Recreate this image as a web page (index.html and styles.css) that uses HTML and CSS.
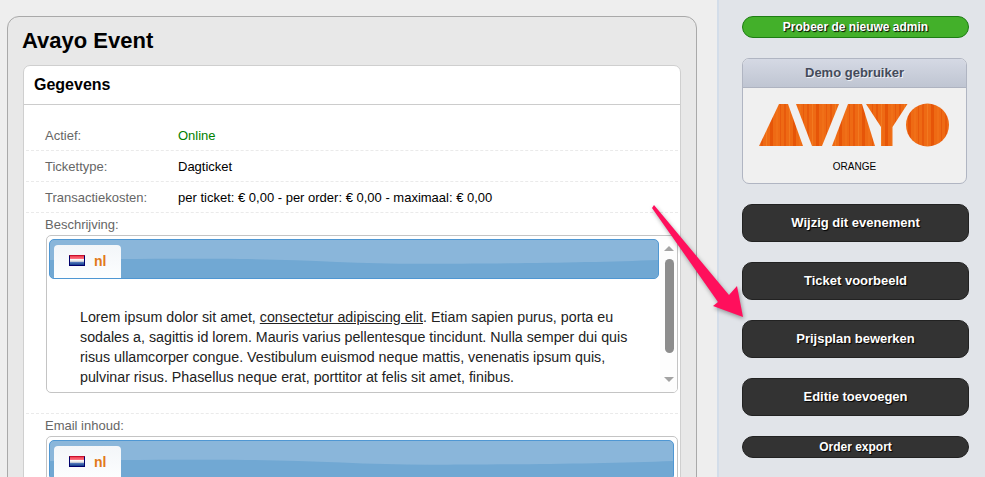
FILE: index.html
```html
<!DOCTYPE html>
<html lang="nl">
<head>
<meta charset="utf-8">
<title>Avayo Event</title>
<link rel="stylesheet" href="styles.css">
</head>
<body>
<div class="page">
  <main class="content">
    <section class="panel">
      <h1 class="title">Avayo Event</h1>
      <div class="card">
        <h2 class="card-head">Gegevens</h2>
        <div class="card-body">
          <div class="row"><span class="label">Actief:</span><span class="value online">Online</span></div>
          <div class="row"><span class="label">Tickettype:</span><span class="value">Dagticket</span></div>
          <div class="row"><span class="label">Transactiekosten:</span><span class="value">per ticket: € 0,00 - per order: € 0,00 - maximaal: € 0,00</span></div>
          <div class="block">
            <div class="block-label">Beschrijving:</div>
            <div class="editor">
              <div class="editor-main">
                <div class="tabbar">
                  <svg class="wave" viewBox="0 0 610 40" preserveAspectRatio="none"><path d="M0 21C60 20 130 19.500 191 20S310 25 371 25 540 24 610 21V40H0Z" fill="#71a8d3"/></svg>
                  <div class="tab">
                    <span class="flag"></span><span class="lang">nl</span>
                  </div>
                </div>
                <p class="lorem">Lorem ipsum dolor sit amet, <u>consectetur adipiscing elit</u>. Etiam sapien purus, porta eu sodales a, sagittis id lorem. Mauris varius pellentesque tincidunt. Nulla semper dui quis risus ullamcorper congue. Vestibulum euismod neque mattis, venenatis ipsum quis, pulvinar risus. Phasellus neque erat, porttitor at felis sit amet, finibus.</p>
              </div>
              <div class="scrollbar">
                <span class="arrow up"></span>
                <span class="thumb"></span>
                <span class="arrow down"></span>
              </div>
            </div>
          </div>
          <div class="block">
            <div class="block-label">Email inhoud:</div>
            <div class="editor">
              <div class="editor-main editor-wide">
                <div class="tabbar">
                  <svg class="wave" viewBox="0 0 610 40" preserveAspectRatio="none"><path d="M0 21C60 20 130 19.500 191 20S310 25 371 25 540 24 610 21V40H0Z" fill="#71a8d3"/></svg>
                  <div class="tab">
                    <span class="flag"></span><span class="lang">nl</span>
                  </div>
                </div>
              </div>
            </div>
          </div>
        </div>
      </div>
    </section>
  </main>
  <aside class="sidebar">
    <a class="btn btn-green">Probeer de nieuwe admin</a>
    <div class="demo">
      <div class="demo-head">Demo gebruiker</div>
      <div class="demo-body">
        <svg class="logo" width="192" height="44" viewBox="0 0 192 44">
          <defs>
            <pattern id="wood" width="23" height="44" patternUnits="userSpaceOnUse">
              <rect width="23" height="44" fill="#ee6a14"/>
              <rect x="2" width="2" height="44" fill="#e85a0c"/>
              <rect x="7" width="1" height="44" fill="#f27a20"/>
              <rect x="11" width="3" height="44" fill="#e65508"/>
              <rect x="17" width="2" height="44" fill="#f07018"/>
              <rect x="21" width="1" height="44" fill="#e85a0c"/>
            </pattern>
          </defs>
          <g fill="url(#wood)">
            <path d="M0 43 20 1H29L44 43Z"/>
            <path d="M37 1H80L63 43H53Z"/>
            <path d="M73 43 89 1H103L116 43Z"/>
            <path d="M107 1H148.500L133.500 24V43H122V24Z"/>
            <circle cx="168.500" cy="22" r="21.500"/>
          </g>
        </svg>
        <div class="logo-name">ORANGE</div>
      </div>
    </div>
    <a class="btn btn-dark">Wijzig dit evenement</a>
    <a class="btn btn-dark">Ticket voorbeeld</a>
    <a class="btn btn-dark">Prijsplan bewerken</a>
    <a class="btn btn-dark">Editie toevoegen</a>
    <a class="btn btn-dark btn-small">Order export</a>
  </aside>
</div>
<svg class="pointer" width="100" height="130" viewBox="0 0 100 130">
  <path d="M3 0 78 90 86 81 92 112 62 101 67 97 1 3Z" fill="#ff0f5c"/>
</svg>
</body>
</html>
```
FILE: styles.css
```css
* { box-sizing: border-box; }
html, body { margin: 0; height: 100%; overflow: hidden; }
body {
  background: #eeeeee;
  font-family: "Liberation Sans", Arial, sans-serif;
  font-size: 13px;
  color: #000;
  position: relative;
}
.page { display: flex; height: 477px; overflow: hidden; }
.content { width: 717px; padding: 16px 0 0 7px; flex: none; }
.panel {
  width: 690px;
  height: 600px;
  background: #e8e8e8;
  border: 1px solid #a9a9a9;
  border-radius: 12px;
  padding: 0 15px;
}
.title { margin: 0 0 0 -1px; padding: 9px 0 0 0; height: 48px; font-size: 22px; line-height: 30px; font-weight: bold; }
.card {
  background: #fff;
  border: 1px solid #cfcfcf;
  border-radius: 7px;
  width: 658px;
}
.card-head { margin: 0; height: 39px; padding: 0 10px; font-size: 16px; line-height: 37px; font-weight: bold; border-bottom: 1px solid #cccccc; }
.card-body { padding: 15px 2px 0 2px; }
.row { display: flex; height: 31px; border-bottom: 1px dashed #eaeaea; line-height: 32px; padding-left: 19px; }
.label { width: 133px; flex: none; color: #666; }
.value { color: #000; }
.online { color: #008000; }
.block { padding: 5px 0 0 20px; border-bottom: 1px dashed #eaeaea; height: 201px; }
.block-label { color: #666; line-height: 14px; margin-bottom: 3px; margin-left: -1px; }
.editor {
  display: flex;
  width: 632px;
  height: 158px;
  background: #fff;
  border: 1px solid #c4c4c4;
  border-radius: 5px;
  padding: 3px 0 0 2px;
  overflow: hidden;
}
.editor-main { width: 610px; flex: none; }
.editor-wide { width: 625px; }
.tabbar {
  position: relative;
  height: 40px;
  background: #8ab6da;
  border: 1px solid #4f97d3;
  border-radius: 5px;
  padding: 5px 0 0 4px;
  display: flex;
  overflow: hidden;
}
.wave { position: absolute; left: 0; top: 0; width: 100%; height: 100%; }
.tab {
  position: relative;
  width: 67px;
  height: 34px;
  background: linear-gradient(#f3f6f9, #fdfeff);
  border-radius: 4px 4px 0 0;
  display: flex;
  align-items: center;
  padding: 0 0 0 15px;
}
.flag {
  width: 16px;
  height: 11px;
  border: 1px solid #00006b;
  border-top-color: #c8102e;
  background: linear-gradient(#ee3c4c 0, #f78 33%, #fff 34%, #ddd 60%, #5a7fc0 66%, #123a8c 100%);
  margin-top: -4px;
}
.lang { margin-left: 9px; color: #e27a1a; font-size: 14px; font-weight: bold; margin-top: -3px; }
.lorem { margin: 28px 0 0 31px; width: 560px; font-size: 14.25px; line-height: 20px; color: #222; }
.scrollbar { width: 18px; flex: none; display: flex; flex-direction: column; align-items: center; padding: 10px 0 0 0; background: #fdfdfd; margin: -3px 0 0 1px; }
.arrow { width: 0; height: 0; border-left: 5px solid transparent; border-right: 5px solid transparent; }
.arrow.up { border-bottom: 5px solid #a3a3a3; }
.arrow.down { border-top: 5px solid #a3a3a3; margin-top: 24px; }
.thumb { width: 9px; height: 94px; background: #8d8d8d; border-radius: 5px; margin-top: 8px; }
.sidebar {
  flex: 1;
  background: #e1e4e9;
  border-left: 2px solid #d3dde9;
  padding: 16px 16px 0 23px;
  display: flex;
  flex-direction: column;
}
.btn {
  display: block;
  width: 227px;
  height: 38px;
  margin-bottom: 20px;
  background: #333333;
  border: 1px solid #222;
  border-radius: 10px;
  color: #fff;
  text-align: center;
  font-size: 13px;
  font-weight: bold;
  line-height: 35px;
  text-shadow: 1px 1px 1px #000;
  flex: none;
}
.btn-green, .btn-small { height: 22px; line-height: 20px; border-radius: 11px; font-size: 12px; }
.btn-green { background: #43b02a; border-color: #1e7d14; margin-bottom: 20px; }
.btn-small { margin-bottom: 0; }
.demo {
  width: 225px;
  height: 126px;
  border: 1px solid #b0b5c2;
  border-radius: 7px;
  background: #f0f0f0;
  margin-bottom: 20px;
  overflow: hidden;
}
.demo-head {
  height: 29px;
  background: linear-gradient(#d5d9e4, #bfc5d2);
  border-bottom: 1px solid #aeb3c0;
  text-align: center;
  color: #444b5a;
  font-size: 13px;
  font-weight: bold;
  line-height: 27px;
  text-shadow: 1px 1px 0 #eef0f5;
}
.demo-body { padding: 15px 0 0 16px; }
.logo { display: block; }
.logo-name { margin: 13px 0 0 -16px; text-align: center; font-size: 10px; line-height: 13px; }
.pointer { position: absolute; left: 651px; top: 205px; filter: drop-shadow(1px 2px 2px rgba(0,0,0,.35)); }
```
